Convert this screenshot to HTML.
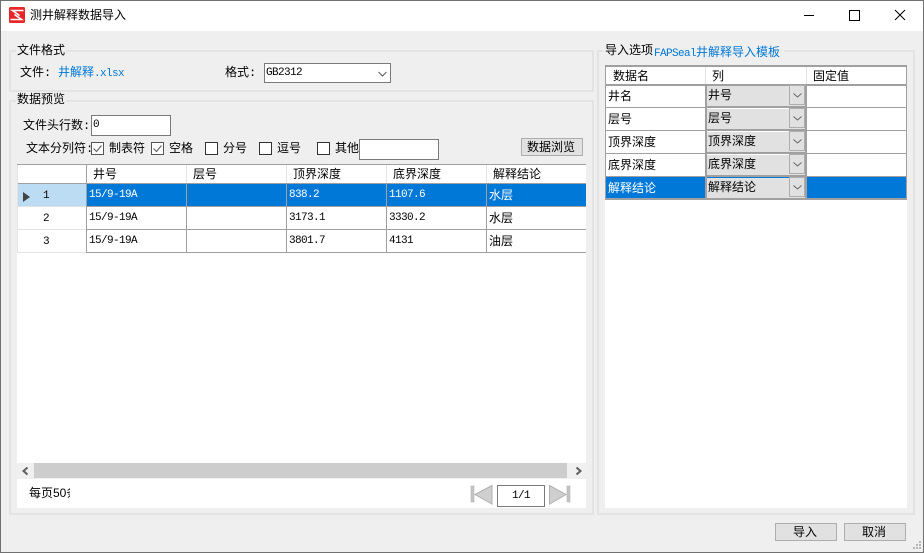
<!DOCTYPE html>
<html><head><meta charset="utf-8"><style>
html,body{margin:0;padding:0;width:924px;height:553px;overflow:hidden;background:#efefef}
body{position:relative;font-family:"Liberation Mono","WenQuanYi Zen Hei","Noto Sans CJK SC",monospace;font-size:12px;color:#000}
.a,.t,.l,.box,.g{position:absolute}
.t{white-space:nowrap;line-height:14px;height:14px}
.w{color:#fff}.b{color:#0078d7}
.m{font-size:11px;letter-spacing:-0.6px}
.g{border:2px solid #e3e3e3;box-sizing:border-box}
.bk{background:#fff}
.hl{position:absolute;background:#a0a0a0;height:2px}
.vl{position:absolute;background:#a0a0a0;width:2px}
.box{background:#fff;border:1px solid #7a7a7a;box-sizing:border-box}
.cb{position:absolute;width:13px;height:13px;border:1px solid #333;background:#fff;box-sizing:border-box}
.btn{position:absolute;background:#e1e1e1;border:1px solid #adadad;box-sizing:border-box;text-align:center;line-height:18px;padding-right:2px}
.combo{position:absolute;left:707px;width:98px;height:20px;background:#e1e1e1;line-height:20px;padding-left:1px;box-sizing:border-box}
.dd{position:absolute;left:789px;width:16px;height:20px;background:#e1e1e1;border:1px solid #adadad;box-sizing:border-box}
svg{position:absolute;overflow:visible}
</style></head><body>
<!-- window frame -->
<div class="a" style="left:0;top:0;width:924px;height:31px;background:#fff"></div>
<div class="a" style="left:0;top:0;width:924px;height:1px;background:#707070"></div>
<div class="a" style="left:0;top:0;width:1px;height:553px;background:#707070"></div>
<div class="a" style="left:923px;top:0;width:1px;height:553px;background:#707070"></div>
<div class="a" style="left:0;top:552px;width:924px;height:1px;background:#707070"></div>
<!-- logo -->
<svg style="left:9px;top:7px" width="16" height="16" viewBox="0 0 16 16"><rect width="16" height="16" rx="1.5" fill="#e8262a"/><path d="M14.5 3.5H3.5L10.5 8.5M1.5 12.5H12.5L5.5 7.5" fill="none" stroke="#fff" stroke-width="1.6"/></svg>
<span class="t" style="left:30px;top:9px">测井解释数据导入</span>
<!-- window controls -->
<div class="a" style="left:804px;top:15px;width:10px;height:1px;background:#000"></div>
<div class="a" style="left:849px;top:10px;width:11px;height:11px;border:1px solid #000;box-sizing:border-box"></div>
<svg style="left:895px;top:10px" width="10" height="10"><path d="M0 0L10 10M10 0L0 10" stroke="#000" stroke-width="1"/></svg>

<!-- groups -->
<div class="g" style="left:9px;top:50px;width:585px;height:42px"></div>
<div class="a" style="left:16px;top:44px;width:50px;height:12px;background:#efefef"></div>
<span class="t" style="left:17px;top:44px">文件格式</span>
<span class="t" style="left:20px;top:66px">文件:</span>
<span class="t b" style="left:58px;top:66px">井解释<span class="m">.xlsx</span></span>
<span class="t" style="left:225px;top:66px">格式:</span>
<div class="box" style="left:264px;top:63px;width:127px;height:20px"></div>
<span class="t m" style="left:266px;top:66px">GB2312</span>
<svg style="left:378px;top:71px" width="9" height="6"><path d="M0.5 1L4.5 5L8.5 1" fill="none" stroke="#555"/></svg>

<div class="g" style="left:9px;top:100px;width:585px;height:415px"></div>
<div class="a" style="left:16px;top:94px;width:50px;height:12px;background:#efefef"></div>
<span class="t" style="left:17px;top:93px">数据预览</span>
<span class="t" style="left:23px;top:119px">文件头行数:</span>
<div class="box" style="left:91px;top:115px;width:80px;height:21px"></div>
<span class="t m" style="left:93px;top:118px">0</span>
<span class="t" style="left:26px;top:142px">文本分列符:</span>
<div class="cb" style="left:91px;top:142px;border-color:#555"></div><svg style="left:91px;top:142px" width="13" height="13"><path d="M2.5 6.5L5.5 9.5L10.5 3.5" fill="none" stroke="#666" stroke-width="1.2"/></svg>
<span class="t" style="left:109px;top:142px">制表符</span>
<div class="cb" style="left:151px;top:142px;border-color:#555"></div><svg style="left:151px;top:142px" width="13" height="13"><path d="M2.5 6.5L5.5 9.5L10.5 3.5" fill="none" stroke="#666" stroke-width="1.2"/></svg>
<span class="t" style="left:169px;top:142px">空格</span>
<div class="cb" style="left:205px;top:142px"></div><span class="t" style="left:223px;top:142px">分号</span>
<div class="cb" style="left:259px;top:142px"></div><span class="t" style="left:277px;top:142px">逗号</span>
<div class="cb" style="left:317px;top:142px"></div><span class="t" style="left:335px;top:142px">其他</span>
<div class="box" style="left:359px;top:139px;width:80px;height:21px"></div>
<div class="btn" style="left:521px;top:138px;width:62px;height:18px">数据浏览</div>

<!-- left grid -->
<div class="a bk" style="left:17px;top:165px;width:569px;height:343px"></div>
<div class="a" style="left:18px;top:184px;width:68px;height:22px;background:#bcdcf4"></div>
<div class="a" style="left:87px;top:184px;width:499px;height:22px;background:#0078d7"></div>
<div class="a" style="left:17px;top:164px;width:569px;height:1px;background:#a0a0a0"></div>
<div class="a" style="left:17px;top:183px;width:569px;height:1px;background:#a0a0a0"></div>
<div class="a" style="left:17px;top:206px;width:69px;height:1px;background:#e3e3e3"></div>
<div class="a" style="left:17px;top:229px;width:69px;height:1px;background:#e3e3e3"></div>
<div class="a" style="left:17px;top:252px;width:69px;height:1px;background:#e3e3e3"></div>
<div class="a" style="left:86px;top:206px;width:500px;height:1px;background:#a0a0a0"></div>
<div class="a" style="left:86px;top:229px;width:500px;height:1px;background:#a0a0a0"></div>
<div class="a" style="left:86px;top:252px;width:500px;height:1px;background:#a0a0a0"></div>
<div class="a" style="left:17px;top:165px;width:1px;height:88px;background:#e3e3e3"></div>
<div class="a" style="left:86px;top:165px;width:1px;height:88px;background:#a0a0a0"></div>
<div class="a" style="left:186px;top:165px;width:1px;height:18px;background:#e3e3e3"></div>
<div class="a" style="left:286px;top:165px;width:1px;height:18px;background:#e3e3e3"></div>
<div class="a" style="left:386px;top:165px;width:1px;height:18px;background:#e3e3e3"></div>
<div class="a" style="left:486px;top:165px;width:1px;height:18px;background:#e3e3e3"></div>
<div class="a" style="left:186px;top:183px;width:1px;height:70px;background:#a0a0a0"></div>
<div class="a" style="left:286px;top:183px;width:1px;height:70px;background:#a0a0a0"></div>
<div class="a" style="left:386px;top:183px;width:1px;height:70px;background:#a0a0a0"></div>
<div class="a" style="left:486px;top:183px;width:1px;height:70px;background:#a0a0a0"></div>
<span class="t" style="left:93px;top:168px">井号</span>
<span class="t" style="left:193px;top:168px">层号</span>
<span class="t" style="left:293px;top:168px">顶界深度</span>
<span class="t" style="left:393px;top:168px">底界深度</span>
<span class="t" style="left:493px;top:168px">解释结论</span>
<svg style="left:23px;top:192px" width="7" height="10"><path d="M0 0L7 5L0 10Z" fill="#444"/></svg>
<span class="t m" style="left:43px;top:189px">1</span>
<span class="t m" style="left:43px;top:212px">2</span>
<span class="t m" style="left:43px;top:235px">3</span>
<span class="t m w" style="left:89px;top:188px">15/9-19A</span>
<span class="t m w" style="left:289px;top:188px">838.2</span>
<span class="t m w" style="left:389px;top:188px">1107.6</span>
<span class="t w" style="left:489px;top:189px">水层</span>
<span class="t m" style="left:89px;top:211px">15/9-19A</span>
<span class="t m" style="left:289px;top:211px">3173.1</span>
<span class="t m" style="left:389px;top:211px">3330.2</span>
<span class="t" style="left:489px;top:212px">水层</span>
<span class="t m" style="left:89px;top:234px">15/9-19A</span>
<span class="t m" style="left:289px;top:234px">3801.7</span>
<span class="t m" style="left:389px;top:234px">4131</span>
<span class="t" style="left:489px;top:235px">油层</span>

<!-- scrollbar -->
<div class="a" style="left:17px;top:463px;width:569px;height:16px;background:#f0f0f0"></div>
<div class="a" style="left:34px;top:463px;width:533px;height:15px;background:#cdcdcd"></div>
<svg style="left:22px;top:467px" width="7" height="8"><path d="M5.5 0.5L1.5 4L5.5 7.5" fill="none" stroke="#606060" stroke-width="2"/></svg>
<svg style="left:575px;top:467px" width="7" height="8"><path d="M1.5 0.5L5.5 4L1.5 7.5" fill="none" stroke="#606060" stroke-width="2"/></svg>

<!-- pager -->
<div class="a" style="left:29px;top:486px;width:41px;height:14px;overflow:hidden;white-space:nowrap;font-family:'Liberation Sans','WenQuanYi Zen Hei',sans-serif;line-height:14px">每页50条</div>
<svg style="left:471px;top:485px" width="22" height="20"><rect x="0" y="1" width="3" height="16" fill="#c4c4c4" stroke="#aaa" stroke-width="0.5"/><path d="M4 9.5L21 0.5V19Z" fill="#cfcfcf" stroke="#b0b0b0"/></svg>
<div class="box m" style="left:497px;top:485px;width:48px;height:22px;text-align:center;line-height:20px">1/1</div>
<svg style="left:549px;top:485px" width="22" height="20"><path d="M0.5 0.5L17 9.5L0.5 19Z" fill="#cfcfcf" stroke="#b0b0b0"/><rect x="18" y="1" width="3" height="16" fill="#c4c4c4" stroke="#aaa" stroke-width="0.5"/></svg>

<!-- right group -->
<div class="g" style="left:597px;top:50px;width:318px;height:465px"></div>
<div class="a" style="left:603px;top:44px;width:181px;height:12px;background:#efefef"></div>
<span class="t" style="left:605px;top:44px">导入选项</span>
<span class="t b" style="left:654px;top:46px"><span class="m">FAPSeal</span>井解释导入模板</span>
<div class="a bk" style="left:605px;top:65px;width:302px;height:443px"></div>
<div class="a" style="left:606px;top:177px;width:300px;height:22px;background:#0078d7"></div>
<div class="hl" style="left:605px;top:65px;width:302px"></div>
<div class="hl" style="left:605px;top:84px;width:302px"></div>
<div class="a" style="left:605px;top:107px;width:302px;height:1px;background:#a0a0a0"></div>
<div class="a" style="left:605px;top:130px;width:302px;height:1px;background:#a0a0a0"></div>
<div class="a" style="left:605px;top:153px;width:302px;height:1px;background:#a0a0a0"></div>
<div class="a" style="left:605px;top:176px;width:302px;height:1px;background:#a0a0a0"></div>
<div class="hl" style="left:605px;top:198px;width:302px"></div>
<div class="a" style="left:705px;top:106px;width:102px;height:2px;background:#a0a0a0"></div>
<div class="a" style="left:705px;top:129px;width:102px;height:2px;background:#a0a0a0"></div>
<div class="a" style="left:705px;top:152px;width:102px;height:2px;background:#a0a0a0"></div>
<div class="a" style="left:705px;top:175px;width:102px;height:2px;background:#a0a0a0"></div>
<div class="a" style="left:605px;top:65px;width:1px;height:135px;background:#a0a0a0"></div>
<div class="a" style="left:906px;top:65px;width:1px;height:135px;background:#a0a0a0"></div>
<div class="a" style="left:705px;top:67px;width:1px;height:17px;background:#e3e3e3"></div>
<div class="a" style="left:806px;top:67px;width:1px;height:17px;background:#e3e3e3"></div>
<div class="vl" style="left:705px;top:84px;height:115px"></div>
<div class="vl" style="left:805px;top:84px;height:115px"></div>
<span class="t" style="left:613px;top:70px">数据名</span>
<span class="t" style="left:712px;top:70px">列</span>
<span class="t" style="left:813px;top:70px">固定值</span>
<span class="t" style="left:608px;top:90px">井名</span>
<span class="t" style="left:608px;top:113px">层号</span>
<span class="t" style="left:608px;top:136px">顶界深度</span>
<span class="t" style="left:608px;top:159px">底界深度</span>
<span class="t w" style="left:608px;top:182px">解释结论</span>

<div class="combo" style="top:86px">井号</div><div class="dd" style="top:85px"></div>
<div class="combo" style="top:109px">层号</div><div class="dd" style="top:108px"></div>
<div class="combo" style="top:132px">顶界深度</div><div class="dd" style="top:131px"></div>
<div class="combo" style="top:155px">底界深度</div><div class="dd" style="top:154px"></div>
<div class="combo" style="top:178px">解释结论</div><div class="dd" style="top:177px"></div>
<svg style="left:793px;top:93px" width="9" height="5"><path d="M0.5 0.5L4.5 4L8.5 0.5" fill="none" stroke="#666"/></svg>
<svg style="left:793px;top:116px" width="9" height="5"><path d="M0.5 0.5L4.5 4L8.5 0.5" fill="none" stroke="#666"/></svg>
<svg style="left:793px;top:139px" width="9" height="5"><path d="M0.5 0.5L4.5 4L8.5 0.5" fill="none" stroke="#666"/></svg>
<svg style="left:793px;top:162px" width="9" height="5"><path d="M0.5 0.5L4.5 4L8.5 0.5" fill="none" stroke="#666"/></svg>
<svg style="left:793px;top:185px" width="9" height="5"><path d="M0.5 0.5L4.5 4L8.5 0.5" fill="none" stroke="#666"/></svg>

<!-- bottom buttons -->
<div class="btn" style="left:775px;top:523px;width:62px;height:18px">导入</div>
<div class="btn" style="left:844px;top:523px;width:62px;height:18px">取消</div>
<svg style="left:913px;top:541px" width="9" height="9" fill="#b8b8b8"><rect x="6" y="0" width="2" height="2"/><rect x="3" y="3" width="2" height="2"/><rect x="6" y="3" width="2" height="2"/><rect x="0" y="6" width="2" height="2"/><rect x="3" y="6" width="2" height="2"/><rect x="6" y="6" width="2" height="2"/></svg>
</body></html>
